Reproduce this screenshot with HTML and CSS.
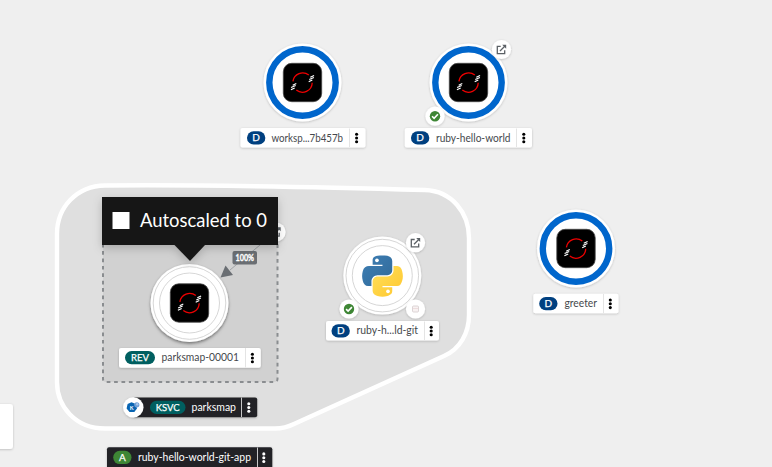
FILE: index.html
```html
<!DOCTYPE html>
<html lang="en">
<head>
<meta charset="utf-8">
<title>Topology</title>
<link rel="stylesheet" href="styles.css">
</head>
<body>
<svg class="canvas" width="772" height="467" viewBox="0 0 772 467">
  <defs>
    <filter id="soft" x="-20%" y="-20%" width="140%" height="150%"><feDropShadow dx="0" dy="0.7" stdDeviation="0.8" flood-color="#000" flood-opacity=".22"/></filter>
    <filter id="lift" x="-20%" y="-20%" width="140%" height="160%"><feDropShadow dx="0" dy="2" stdDeviation="1.8" flood-color="#000" flood-opacity=".3"/></filter>
    <filter id="tip" x="-20%" y="-30%" width="140%" height="170%"><feDropShadow dx="0" dy="3" stdDeviation="5" flood-color="#000" flood-opacity=".2"/></filter>
    <linearGradient id="py-blue" x1="0" y1="0" x2="1" y2="1"><stop stop-color="#3e7fb5"/><stop offset="1" stop-color="#306998"/></linearGradient>
    <linearGradient id="py-yellow" x1="0" y1="0" x2="1" y2="1"><stop stop-color="#ffe05c"/><stop offset="1" stop-color="#ffc72e"/></linearGradient>
    <g id="openshift">
      <rect x="-19.2" y="-19.2" width="38.4" height="38.4" rx="8.5" fill="#000" stroke="#444" stroke-width=".8"/>
      <path d="M-9.600-1.200A9.800 9.800 0 0 1 6.300-7.400M9.700.2A9.800 9.800 0 0 1-6.200 7.600" fill="none" stroke="#e00" stroke-width="1.300"/>
      <path d="M7.800-5.200 11.600-7M6.800-3 11.400-5M6.200-.8 9.800-2.500M-9.800 2.700-6.200 1M-11.400 5-6.800 3M-11.600 7.200-7.800 5.400" stroke="#fff" stroke-width="1.150"/>
    </g>
    <g id="kebab"><circle cy="-3.800" r="1.550"/><circle r="1.550"/><circle cy="3.800" r="1.550"/></g>
    <g id="active"><circle r="39" class="disc"/><circle r="33.200" class="ring"/><use href="#openshift"/></g>
    <g id="idle"><circle r="39" class="disc"/><circle r="36.300" class="line"/><circle r="30" class="line"/></g>
    <g id="link"><circle r="9.600" class="disc"/><path d="M-.8-3.200H-4.200V4.200H3.200V.8M-1.500 1.500 3.500-3.500" fill="none" stroke="#5c6166" stroke-width="1.300"/><path d="M.7-4.700H4.700V-.7Z" fill="#5c6166"/></g>
    <g id="success"><circle r="9.600" class="disc"/><circle r="5.200" fill="#3e8635"/><path d="m-2.900.1 2 2 3.800-4" fill="none" stroke="#fff" stroke-width="1.600"/></g>
  </defs>

  <path class="hull" d="M105 185.500C210 184.500 300 186.500 425 190C452 191 469 213 469 238V315C469 333 460 349 444 356L294 424Q285 428.500 275 428.500H105C75 428.500 57 406 57 382V234C57 207 77 186 105 185.500Z"/>
  <rect class="service" x="103" y="222" width="174.500" height="160" rx="3"/>

  <use href="#link" x="276" y="232"/>
  <path d="M266 240 230 270" stroke="#a0a3a6" stroke-width="1"/>
  <path d="m220.500 277.500 5-12 7.500 9.500Z" fill="#6a6e73"/>
  <rect x="232.500" y="251" width="24.500" height="13.500" rx="2" fill="#6a6e73"/>
  <text class="pct" x="235.500" y="261.300" textLength="18.500" lengthAdjust="spacingAndGlyphs">100%</text>

  <use href="#active" x="302.500" y="82.500"/>
  <use href="#active" x="468.500" y="82.500"/>
  <use href="#link" x="501.500" y="49.500"/>
  <use href="#success" x="435" y="116.200"/>
  <use href="#active" x="576" y="248.500"/>
  <g filter="url(#lift)"><use href="#idle" x="189.500" y="303"/></g>
  <use href="#openshift" x="189.500" y="303"/>
  <use href="#idle" x="382.300" y="275.600"/>
  <g transform="translate(362.100 255.400) scale(.367)">
    <path fill="url(#py-blue)" d="M54.900 0C50.300 0 46 .4 42.100 1.100 30.800 3.100 28.700 7.300 28.700 15V25.300H55.500V28.700H18.700C10.900 28.700 4.100 33.400 2 42.300-.5 52.500-.6 58.900 2 69.500 3.900 77.500 8.500 83.200 16.300 83.200H25.500V70.900C25.500 62.100 33.100 54.300 42.100 54.300H68.800C76.200 54.300 82.100 48.200 82.100 40.800V15C82.100 7.800 76.100 2.400 68.800 1.100 64.100.300 59.400 0 54.900 0Z"/>
    <circle cx="40.400" cy="13.500" r="5" fill="#fff"/>
    <path fill="url(#py-yellow)" d="M85.600 28.700V40.600C85.600 49.900 77.800 57.600 68.800 57.600H42.100C34.700 57.600 28.700 63.900 28.700 71.200V96.700C28.700 104 35 108.200 42.100 110.300 50.600 112.800 58.700 113.300 68.800 110.300 75.500 108.400 82.100 104.500 82.100 96.700V86.500H55.500V83.200H95.600C103.400 83.200 106.300 77.700 109 69.500 111.800 61.100 111.700 53 109 42.300 107.100 34.500 103.400 28.700 95.600 28.700Z"/>
    <circle cx="70.500" cy="98" r="5" fill="#fff"/>
  </g>
  <use href="#link" x="415.500" y="242.700"/>
  <use href="#success" x="349" y="309"/>
  <circle class="disc" cx="415.500" cy="309" r="9.600"/>
  <rect x="412.500" y="306" width="6" height="6" rx="1" fill="#f8f2f2" stroke="#d9d0d1" stroke-width=".9"/>
  <path d="M413.500 308.500h4.500" stroke="#e3c9cb" stroke-dasharray="1 1"/>

  <g>
    <rect class="label" x="240.500" y="128" width="125" height="19.500" rx="2"/><path class="split" d="M349.500 128.500v18.500"/>
    <rect class="badge" x="247" y="131.200" width="18.300" height="13.300" rx="6.600"/><text class="kind" x="256.100" y="141.300">D</text>
    <text class="name" x="271.500" y="141.800" textLength="71.500" lengthAdjust="spacingAndGlyphs">worksp...7b457b</text><use href="#kebab" x="356.600" y="138"/>
  </g>
  <g>
    <rect class="label" x="404.800" y="128" width="127.200" height="19.500" rx="2"/><path class="split" d="M516.500 128.500v18.500"/>
    <rect class="badge" x="411" y="131.200" width="18.300" height="13.300" rx="6.600"/><text class="kind" x="420.100" y="141.300">D</text>
    <text class="name" x="436" y="141.800" textLength="74.500" lengthAdjust="spacingAndGlyphs">ruby-hello-world</text><use href="#kebab" x="523.800" y="138"/>
  </g>
  <g>
    <rect class="label" x="533.300" y="293.800" width="85.200" height="19.500" rx="2"/><path class="split" d="M603.500 294v19"/>
    <rect class="badge" x="539.200" y="297" width="18.300" height="13.300" rx="6.600"/><text class="kind" x="548.400" y="307.100">D</text>
    <text class="name" x="564.500" y="307.300" textLength="32.500" lengthAdjust="spacingAndGlyphs">greeter</text><use href="#kebab" x="610.300" y="303.800"/>
  </g>
  <g>
    <rect class="label" x="326" y="321" width="113" height="19.500" rx="2"/><path class="split" d="M424.500 321.500v18.500"/>
    <rect class="badge" x="331.500" y="324.200" width="18.300" height="13.300" rx="6.600"/><text class="kind" x="340.700" y="334.300">D</text>
    <text class="name" x="356.500" y="334.300" textLength="61.500" lengthAdjust="spacingAndGlyphs">ruby-h...ld-git</text><use href="#kebab" x="431.200" y="331"/>
  </g>
  <g>
    <rect class="label" filter="url(#lift)" x="119" y="348" width="141.800" height="19.700" rx="2"/><path class="split" d="M245.500 348v19.500"/>
    <rect class="badge teal" x="125" y="351" width="30" height="13.300" rx="6.600"/><text class="kind" x="140" y="361.200" textLength="18" lengthAdjust="spacingAndGlyphs">REV</text>
    <text class="name" x="161.500" y="361.200" textLength="77.500" lengthAdjust="spacingAndGlyphs">parksmap-00001</text><use href="#kebab" x="252.400" y="358"/>
  </g>
  <g>
    <rect class="label dark" x="133" y="397.500" width="124.200" height="19.700" rx="2"/><path class="split-dark" d="M241.500 397.500v19.500"/>
    <circle class="disc" cx="133.300" cy="407.400" r="10.200"/>
    <path d="m131.500 402.300 4.200 1.800 1.300 4.300-2.700 3.700h-4.800l-2.900-3.700 1-4.300Z" fill="#0864b1"/><circle cx="136.800" cy="404.800" r="2.600" fill="#6f9fd6"/><circle cx="137.200" cy="404.300" r="1.200" fill="#a9c5e8"/>
    <text class="mini" x="131.700" y="409.700">K</text>
    <rect class="badge teal" x="150" y="400.700" width="35.500" height="13.300" rx="6.600"/><text class="kind" x="167.700" y="410.900" textLength="24" lengthAdjust="spacingAndGlyphs">KSVC</text>
    <text class="name light" x="191.500" y="410.800" textLength="44.500" lengthAdjust="spacingAndGlyphs">parksmap</text><use href="#kebab" class="light" x="248.800" y="407.500"/>
  </g>
  <g>
    <rect class="label dark" x="107" y="447.200" width="165.300" height="24" rx="2"/><path class="split-dark" d="M257.500 447.500V467"/>
    <rect class="badge green" x="113.200" y="450.800" width="18.300" height="13.300" rx="6.600"/><text class="kind" x="122.300" y="461">A</text>
    <text class="name light" x="138" y="461" textLength="113" lengthAdjust="spacingAndGlyphs">ruby-hello-world-git-app</text><use href="#kebab" class="light" x="263.800" y="457.700"/>
  </g>

  <path filter="url(#tip)" d="M102 197H278V245H205L190 261 174.500 245H102Z" fill="#151515"/>
  <path d="M112.500 212h17v17h-17Z" fill="#fff"/>
  <text class="tooltip" x="140" y="227" textLength="127" lengthAdjust="spacingAndGlyphs">Autoscaled to 0</text>
  <rect class="label" x="-10" y="404" width="23" height="45" rx="3"/>
</svg>
</body>
</html>
```

FILE: styles.css
```css
body { margin: 0; overflow: hidden; background: #efefef; }
.canvas { display: block; font-family: Lato, "Open Sans", sans-serif; }
.hull { fill: #dfdfdf; stroke: #fff; stroke-width: 4.4; }
.service { fill: #d1d1d1; stroke: #8a8d90; stroke-width: 2; stroke-dasharray: 3.7 3.7; }
.disc { fill: #fff; filter: url(#soft); }
.ring { fill: none; stroke: #0066cc; stroke-width: 6.4; }
.line { fill: none; stroke: #ccc; stroke-width: 0.8; }
.label { fill: #fff; filter: url(#soft); }
.label.dark { fill: #212427; }
.split { stroke: #e4e4e4; stroke-width: 1; }
.split-dark { stroke: #c8c8c8; stroke-width: 1; }
.badge { fill: #004080; }
.badge.teal { fill: #005f60; }
.badge.green { fill: #3e8635; }
.kind { fill: #fff; font-size: 10px; text-anchor: middle; stroke: #fff; stroke-width: 0.25; }
.name { fill: #45484c; font-size: 11px; }
.name.light, .light { fill: #fff; }
.mini { fill: #fff; font-size: 5.5px; font-weight: 700; text-anchor: middle; }
.pct { fill: #fff; font-size: 9px; font-weight: 700; stroke: #fff; stroke-width: 0.3; }
.tooltip { fill: #fff; font-size: 19px; }
```
